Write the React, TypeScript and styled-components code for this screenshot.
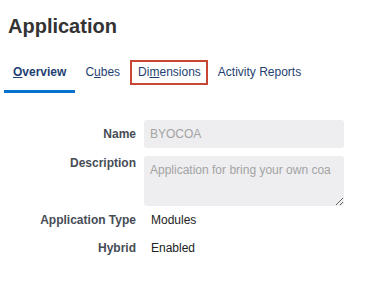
import React from "react";
import styled, { createGlobalStyle } from "styled-components";

const Global = createGlobalStyle`
  html, body { margin: 0; padding: 0; background: #ffffff; }
  body { font-family: "Liberation Sans", Arial, sans-serif; }
`;

const Page = styled.div`
  width: 383px;
  height: 301px;
  background: #fff;
  overflow: hidden;
`;

const Title = styled.h1`
  margin: 15px 0 0 8px;
  font-size: 20px;
  line-height: 23px;
  font-weight: bold;
  color: #333333;
`;

const TabBar = styled.div`
  display: flex;
  margin: 22px 0 0 4px;
  gap: 1px;
`;

const Tab = styled.div<{ $selected?: boolean }>`
  display: flex;
  flex-direction: column;
  padding-bottom: 5px;
  border-bottom: 3px solid ${(p) => (p.$selected ? "#0572ce" : "transparent")};
`;

const TabLabel = styled.div<{ $selected?: boolean; $focused?: boolean }>`
  height: 21px;
  display: flex;
  align-items: center;
  padding: ${(p) => (p.$focused ? "0 5px 0 6px" : "0 7px")};
  border: 2px solid ${(p) => (p.$focused ? "#c74634" : "transparent")};
  font-size: 12px;
  line-height: 15px;
  font-weight: ${(p) => (p.$selected ? "bold" : "normal")};
  color: #1f3f72;
  white-space: nowrap;
`;

const Key = styled.span`
  text-decoration: underline;
`;

const Form = styled.div`
  margin-top: 27px;
  display: flex;
  flex-direction: column;
  gap: 8px;
`;

const Row = styled.div<{ $align?: string }>`
  display: grid;
  grid-template-columns: 136px 200px;
  column-gap: 8px;
  align-items: ${(p) => p.$align || "center"};
`;

const Label = styled.div`
  text-align: right;
  font-size: 12px;
  line-height: 14px;
  font-weight: bold;
  color: #464c56;
`;

const Input = styled.input`
  box-sizing: border-box;
  width: 200px;
  height: 28px;
  margin: 0;
  border: none;
  border-radius: 3px;
  background: #eeeef0;
  padding: 0 6px;
  font-family: "Liberation Sans", Arial, sans-serif;
  font-size: 12px;
  color: #a3a3a3;
  outline: none;
`;

const TextArea = styled.textarea`
  display: block;
  box-sizing: border-box;
  width: 200px;
  height: 50px;
  margin: 0;
  border: none;
  border-radius: 3px;
  background: #eeeef0;
  padding: 7px 6px;
  font-family: "Liberation Sans", Arial, sans-serif;
  font-size: 12px;
  line-height: 14px;
  color: #a3a3a3;
  outline: none;
  resize: both;
`;

const StaticRow = styled(Row)`
  height: 20px;
  align-items: start;
`;

const StaticLabel = styled(Label)`
  line-height: 12px;
`;

const Value = styled.div`
  padding-left: 7px;
  font-size: 12px;
  line-height: 12px;
  color: #222222;
`;

export default function App() {
  return (
    <Page>
      <Global />
      <Title>Application</Title>
      <TabBar>
        <Tab $selected>
          <TabLabel $selected>
            <Key>O</Key>verview
          </TabLabel>
        </Tab>
        <Tab>
          <TabLabel>
            C<Key>u</Key>bes
          </TabLabel>
        </Tab>
        <Tab>
          <TabLabel $focused>
            Di<Key>m</Key>ensions
          </TabLabel>
        </Tab>
        <Tab>
          <TabLabel>Activity Reports</TabLabel>
        </Tab>
      </TabBar>
      <Form>
        <Row>
          <Label>Name</Label>
          <Input readOnly value="BYOCOA" />
        </Row>
        <Row $align="start">
          <Label>Description</Label>
          <TextArea readOnly value="Application for bring your own coa" />
        </Row>
        <StaticRow>
          <StaticLabel>Application Type</StaticLabel>
          <Value>Modules</Value>
        </StaticRow>
        <StaticRow>
          <StaticLabel>Hybrid</StaticLabel>
          <Value>Enabled</Value>
        </StaticRow>
      </Form>
    </Page>
  );
}
